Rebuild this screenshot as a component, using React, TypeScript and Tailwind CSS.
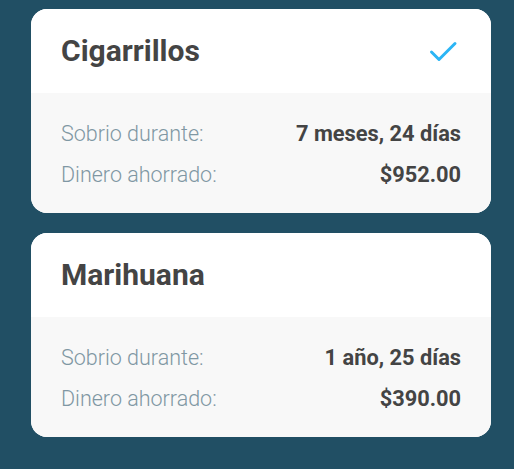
import React from "react";

type Item = { title: string; checked: boolean; sober: string; money: string };

const items: Item[] = [
  { title: "Cigarrillos", checked: true, sober: "7 meses, 24 días", money: "$952.00" },
  { title: "Marihuana", checked: false, sober: "1 año, 25 días", money: "$390.00" },
];

function Card({ item }: { item: Item }) {
  return (
    <div className="rounded-[16px] overflow-hidden bg-white">
      <div className="h-[84px] flex items-center justify-between pl-[30px] pr-[32px] bg-white">
        <span className="text-[30px] font-bold text-[#444444] leading-none">{item.title}</span>
        {item.checked && (
          <svg width="30" height="30" viewBox="0 0 30 30">
            <path d="M2.5 16 L10 23.5 L26 7.5" fill="none" stroke="#2bb5f5" strokeWidth="3" strokeLinecap="round" strokeLinejoin="round" />
          </svg>
        )}
      </div>
      <div className="bg-[#f8f8f8] px-[30px] pt-[27px] pb-[24px] flex flex-col gap-[13px]">
        <div className="flex justify-between items-center leading-[28px]">
          <span className="font-light text-[21.5px] text-[#7f97a3]">Sobrio durante:</span>
          <span className="font-bold text-[21.8px] text-[#444444]">{item.sober}</span>
        </div>
        <div className="flex justify-between items-center leading-[28px]">
          <span className="font-light text-[21.5px] text-[#7f97a3]">Dinero ahorrado:</span>
          <span className="font-bold text-[21.8px] text-[#444444]">{item.money}</span>
        </div>
      </div>
    </div>
  );
}

export default function App() {
  return (
    <div className="min-h-[469px] bg-[#214f64] pt-[9px] pb-[32px] pl-[31px] pr-[23px] flex flex-col gap-[20px]" style={{ fontFamily: "Roboto, sans-serif" }}>
      {items.map((it) => (
        <Card key={it.title} item={it} />
      ))}
    </div>
  );
}
